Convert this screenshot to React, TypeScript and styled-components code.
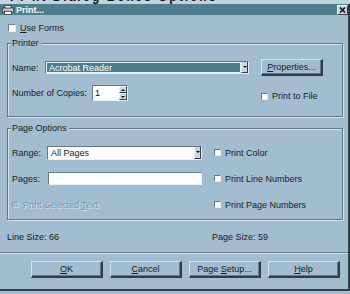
import React from "react";
import styled, { createGlobalStyle } from "styled-components";

const BG = "#a3bdd0";
const DARK = "#2f3f48";
const SHADOW = "#64788a";
const LIGHT = "#d4e1ea";
const TEAL = "#4e7e8d";

const Global = createGlobalStyle`
  html, body { margin: 0; padding: 0; background: ${BG}; }
  body {
    font-family: "Liberation Sans", Arial, sans-serif;
    font-size: 9px;
    color: #151a1e;
    width: 350px;
    height: 294px;
    overflow: hidden;
  }
  * { box-sizing: border-box; }
`;

const TopStrip = styled.div`
  height: 4px;
  overflow: hidden;
  background: #c3d3de;
  padding-left: 10px;
`;

const BehindText = styled.div`
  font-size: 12px;
  font-weight: bold;
  line-height: 12px;
  margin-top: -9px;
  letter-spacing: 2px;
  color: #111;
  white-space: nowrap;
`;

const Dialog = styled.div`
  width: 350px;
  height: 287px;
  background: ${BG};
  border-right: 2px solid ${DARK};
  border-bottom: 2px solid ${DARK};
  display: flex;
  flex-direction: column;
`;

const TitleBar = styled.div`
  height: 11px;
  background: ${TEAL};
  display: flex;
  align-items: center;
  padding: 0 0 0 2px;
`;

const TitleText = styled.span`
  color: #fff;
  font-weight: bold;
  font-size: 9px;
  margin-left: 2px;
  flex: 1;
`;

const CloseButton = styled.div`
  width: 11px;
  height: 10px;
  background: #cdd6dc;
  border-top: 1px solid #eef3f6;
  border-left: 1px solid #eef3f6;
  border-right: 1px solid ${DARK};
  border-bottom: 1px solid ${DARK};
  display: flex;
  align-items: center;
  justify-content: center;
`;

const Body = styled.div`
  padding: 0 5px 0 7px;
  display: flex;
  flex-direction: column;
`;

const CheckItem = styled.label<{ $disabled?: boolean }>`
  display: flex;
  align-items: center;
  gap: 4px;
  height: 10px;
  white-space: nowrap;
  color: ${(p) => (p.$disabled ? "#8299aa" : "#151a1e")};
  text-shadow: ${(p) => (p.$disabled ? `1px 1px 0 ${LIGHT}` : "none")};
`;

const Box = styled.span<{ $size?: number; $disabled?: boolean }>`
  display: inline-block;
  width: ${(p) => p.$size ?? 7}px;
  height: ${(p) => p.$size ?? 7}px;
  background: ${(p) => (p.$disabled ? BG : "#fff")};
  border-top: 1px solid ${(p) => (p.$disabled ? "#8aa0b0" : SHADOW)};
  border-left: 1px solid ${(p) => (p.$disabled ? "#8aa0b0" : SHADOW)};
  border-right: 1px solid ${(p) => (p.$disabled ? "#c0d0dc" : "#e6eef3")};
  border-bottom: 1px solid ${(p) => (p.$disabled ? "#c0d0dc" : "#e6eef3")};
  flex: none;
`;

const UseFormsRow = styled.div`
  margin-top: 8px;
  padding-left: 1px;
  height: 10px;
  display: flex;
`;

const Group = styled.div<{ $h: number; $mt: number }>`
  position: relative;
  margin-top: ${(p) => p.$mt}px;
  height: ${(p) => p.$h}px;
  border: 1px solid ${SHADOW};
  box-shadow: 1px 1px 0 ${LIGHT}, inset 1px 1px 0 ${LIGHT};
`;

const Legend = styled.span`
  position: absolute;
  top: -6px;
  left: 3px;
  padding: 0 2px 0 1px;
  background: ${BG};
  line-height: 11px;
`;

const PrinterGrid = styled.div`
  display: grid;
  grid-template-columns: 237px auto;
  column-gap: 12px;
  grid-template-rows: 17px 16px;
  row-gap: 9px;
  padding: 15px 0 0 4px;
`;

const FieldRow = styled.div`
  display: flex;
  align-items: center;
`;

const FieldLabel = styled.span<{ $w: number }>`
  width: ${(p) => p.$w}px;
  flex: none;
  white-space: nowrap;
`;

const Combo = styled.div<{ $w: number; $h: number; $selected?: boolean }>`
  width: ${(p) => p.$w}px;
  height: ${(p) => p.$h}px;
  display: flex;
  background: #fff;
  border-top: 1px solid ${SHADOW};
  border-left: 1px solid ${SHADOW};
  border-right: 1px solid #e8f0f4;
  border-bottom: 1px solid #e8f0f4;
`;

const ComboValue = styled.div<{ $selected?: boolean }>`
  flex: 1;
  margin: 1px;
  padding-left: 2px;
  display: flex;
  align-items: center;
  background: ${(p) => (p.$selected ? TEAL : "#fff")};
  color: ${(p) => (p.$selected ? "#fff" : "#151a1e")};
  outline: ${(p) => (p.$selected ? "1px dotted #c8dce4" : "none")};
  white-space: nowrap;
`;

const ArrowButton = styled.div`
  width: 7px;
  background: #ccd6dd;
  border-left: 1px solid #eef3f6;
  border-right: 1px solid ${DARK};
  border-bottom: 1px solid ${DARK};
  display: flex;
  align-items: center;
  justify-content: center;
`;

const Arrow = styled.span<{ $up?: boolean }>`
  width: 0;
  height: 0;
  border-left: 2px solid transparent;
  border-right: 2px solid transparent;
  ${(p) => (p.$up ? "border-bottom: 2px solid #111;" : "border-top: 2px solid #111;")}
`;

const Spin = styled.div`
  width: 36px;
  height: 16px;
  display: flex;
  background: #fff;
  border-top: 1px solid ${SHADOW};
  border-left: 1px solid ${SHADOW};
  border-right: 1px solid #e8f0f4;
  border-bottom: 1px solid #e8f0f4;
`;

const SpinValue = styled.div`
  flex: 1;
  padding-left: 2px;
  display: flex;
  align-items: center;
  color: #111;
`;

const SpinButtons = styled.div`
  width: 8px;
  display: flex;
  flex-direction: column;
`;

const SpinButton = styled.div`
  flex: 1;
  background: #ccd6dd;
  border-top: 1px solid #eef3f6;
  border-left: 1px solid #eef3f6;
  border-right: 1px solid ${DARK};
  border-bottom: 1px solid ${DARK};
  display: flex;
  align-items: center;
  justify-content: center;
`;

const Button = styled.div<{ $w: number }>`
  width: ${(p) => p.$w}px;
  height: 17px;
  background: ${BG};
  border-top: 1px solid ${LIGHT};
  border-left: 1px solid ${LIGHT};
  border-right: 2px solid ${DARK};
  border-bottom: 2px solid ${DARK};
  box-shadow: inset -1px -1px 0 ${SHADOW};
  display: flex;
  align-items: center;
  justify-content: center;
  white-space: nowrap;
  padding-bottom: 1px;
`;

const RightCell = styled.div<{ $end?: boolean }>`
  display: flex;
  align-items: ${(p) => (p.$end ? "flex-end" : "center")};
`;

const OptionsGrid = styled.div`
  display: grid;
  grid-template-columns: 191px auto;
  column-gap: 11px;
  grid-template-rows: 15px 15px 15px;
  row-gap: 11px;
  padding: 16px 0 0 4px;
`;

const InfoRow = styled.div`
  margin-top: 11px;
  height: 11px;
  display: grid;
  grid-template-columns: 205px auto;
  align-items: center;
`;

const Separator = styled.div`
  margin-top: 10px;
  border-top: 1px solid ${SHADOW};
  border-bottom: 1px solid ${LIGHT};
`;

const ButtonBar = styled.div`
  margin-top: 7px;
  padding-left: 31px;
  display: flex;
  gap: 7px;
`;

const PrinterIcon = () => (
  <svg width="12" height="10" viewBox="0 0 12 10">
    <rect x="3" y="0.5" width="6" height="3" fill="#fff" stroke="#333" strokeWidth="0.8" />
    <rect x="0.5" y="3" width="11" height="4.5" fill="#b8c0c4" stroke="#333" strokeWidth="0.8" />
    <rect x="2.5" y="6.5" width="7" height="3" fill="#fff" stroke="#333" strokeWidth="0.8" />
    <rect x="9" y="4" width="1.3" height="1" fill="#ff0" />
  </svg>
);

const CloseGlyph = () => (
  <svg width="7" height="6" viewBox="0 0 7 6">
    <path d="M1 0.5 L6 5.5 M6 0.5 L1 5.5" stroke="#111" strokeWidth="1.6" />
  </svg>
);

export default function App() {
  return (
    <>
      <Global />
      <TopStrip>
        <BehindText>Pr nt  Dialog  Boxes  Options</BehindText>
      </TopStrip>
      <Dialog>
        <TitleBar>
          <PrinterIcon />
          <TitleText>Print...</TitleText>
          <CloseButton>
            <CloseGlyph />
          </CloseButton>
        </TitleBar>
        <Body>
          <UseFormsRow>
            <CheckItem>
              <Box $size={8} />
              <span>
                <u>U</u>se Forms
              </span>
            </CheckItem>
          </UseFormsRow>

          <Group $mt={10} $h={74}>
            <Legend>Printer</Legend>
            <PrinterGrid>
              <FieldRow>
                <FieldLabel $w={33}>Name:</FieldLabel>
                <Combo $w={204} $h={13}>
                  <ComboValue $selected>Acrobat Reader</ComboValue>
                  <ArrowButton>
                    <Arrow />
                  </ArrowButton>
                </Combo>
              </FieldRow>
              <RightCell>
                <Button $w={62}>
                  <span>
                    <u>P</u>roperties...
                  </span>
                </Button>
              </RightCell>
              <FieldRow>
                <FieldLabel $w={80}>Number of Copies:</FieldLabel>
                <Spin>
                  <SpinValue>1</SpinValue>
                  <SpinButtons>
                    <SpinButton>
                      <Arrow $up />
                    </SpinButton>
                    <SpinButton>
                      <Arrow />
                    </SpinButton>
                  </SpinButtons>
                </Spin>
              </FieldRow>
              <RightCell $end>
                <CheckItem>
                  <Box />
                  <span>Print to File</span>
                </CheckItem>
              </RightCell>
            </PrinterGrid>
          </Group>

          <Group $mt={11} $h={92}>
            <Legend>Page Options</Legend>
            <OptionsGrid>
              <FieldRow>
                <FieldLabel $w={35}>Range:</FieldLabel>
                <Combo $w={155} $h={14}>
                  <ComboValue>All Pages</ComboValue>
                  <ArrowButton>
                    <Arrow />
                  </ArrowButton>
                </Combo>
              </FieldRow>
              <RightCell>
                <CheckItem>
                  <Box />
                  <span>Print Color</span>
                </CheckItem>
              </RightCell>
              <FieldRow>
                <FieldLabel $w={36}>Pages:</FieldLabel>
                <Combo $w={154} $h={13}>
                  <ComboValue />
                </Combo>
              </FieldRow>
              <RightCell>
                <CheckItem>
                  <Box />
                  <span>Print Line Numbers</span>
                </CheckItem>
              </RightCell>
              <FieldRow>
                <CheckItem $disabled>
                  <Box $disabled />
                  <span>
                    Print Selected <u>T</u>ext
                  </span>
                </CheckItem>
              </FieldRow>
              <RightCell>
                <CheckItem>
                  <Box />
                  <span>Print Page Numbers</span>
                </CheckItem>
              </RightCell>
            </OptionsGrid>
          </Group>

          <InfoRow>
            <span>Line Size: 66</span>
            <span>Page Size: 59</span>
          </InfoRow>
        </Body>
        <Separator />
        <ButtonBar>
          <Button $w={72}>
            <span>
              <u>O</u>K
            </span>
          </Button>
          <Button $w={72}>
            <span>
              <u>C</u>ancel
            </span>
          </Button>
          <Button $w={72}>
            <span>
              Page <u>S</u>etup...
            </span>
          </Button>
          <Button $w={72}>
            <span>
              <u>H</u>elp
            </span>
          </Button>
        </ButtonBar>
      </Dialog>
    </>
  );
}
